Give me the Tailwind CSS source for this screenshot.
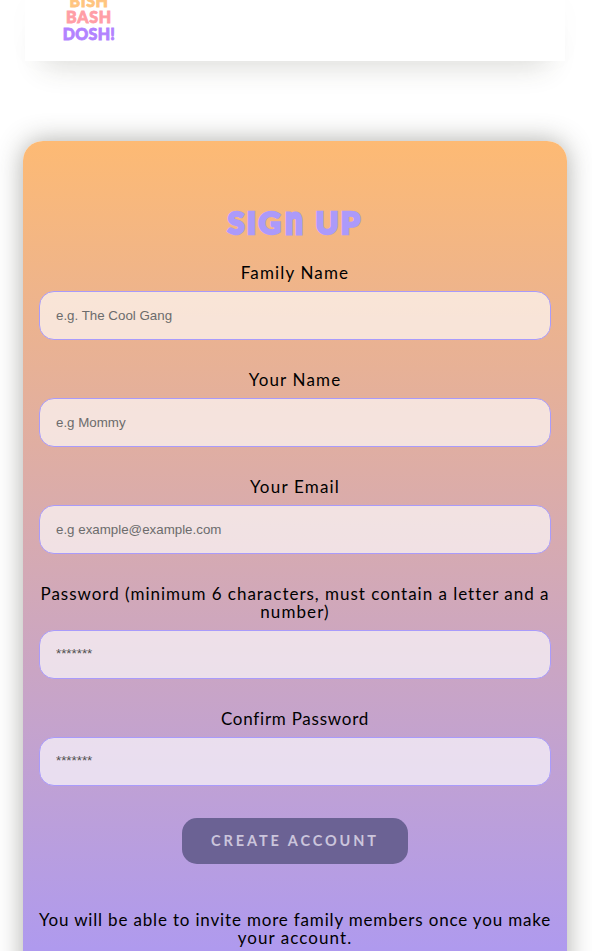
<!DOCTYPE html>
<html lang="en">
<head>
<meta charset="utf-8">
<title>Sign Up</title>
<script src="https://cdn.jsdelivr.net/npm/@tailwindcss/browser@4"></script>
</head>
<body class="h-[951px] overflow-hidden bg-white text-black font-['Lato','Open_Sans',sans-serif]">
<header class="mx-auto flex h-[61px] w-[540px] -translate-x-px items-end bg-white pb-[19px] pl-[38px] shadow-[0_22px_30px_-18px_rgba(60,60,40,0.2),0_0_28px_rgba(0,0,0,0.02)]">
  <div class="flex w-[52px] flex-col items-center text-[16px] leading-[16.5px] font-black [-webkit-text-stroke:0.8px_currentColor]">
    <span class="tracking-[0.6px] text-[#ffc580]">BISH</span>
    <span class="tracking-[0.8px] text-[#ff9ea6]">BASH</span>
    <span class="tracking-[0.3px] text-[#b283ff]">DOSH!</span>
  </div>
</header>
<main class="mx-auto mt-20 flex h-[860px] w-[544px] -translate-x-px flex-col items-center bg-[linear-gradient(180deg,#fdba74_0,#aa98f6_860px)] rounded-[20px] px-4 pt-[61px] shadow-[0_0_26px_rgba(60,60,50,0.42)]">
  <h1 class="h-[40px] text-[31px] leading-[40px] font-black tracking-[2.2px] [word-spacing:1px] whitespace-nowrap text-[#ac9afa] [-webkit-text-stroke:2.5px_currentColor]">SIG<span class="ml-[2px] inline-block origin-bottom translate-y-px scale-y-[1.28] leading-none">n</span> UP</h1>
  <form class="flex w-full flex-col items-center text-center text-[17px] leading-[18px]">
    <label class="mt-[22px] mb-[9px] whitespace-nowrap"><span class="tracking-[1.15px]">Family Name</span></label>
    <input class="h-[49px] w-full rounded-[15px] border border-[#a99bfb] bg-white/65 px-4 font-['Liberation_Sans',Arial,sans-serif] text-[13.33px] placeholder:text-[#6c6c6c]" placeholder="e.g. The Cool Gang">
    <label class="mt-[31px] mb-[9px] whitespace-nowrap"><span class="tracking-[1.15px]">Your Name</span></label>
    <input class="h-[49px] w-full rounded-[15px] border border-[#a99bfb] bg-white/65 px-4 font-['Liberation_Sans',Arial,sans-serif] text-[13.33px] placeholder:text-[#6c6c6c]" placeholder="e.g Mommy">
    <label class="mt-[31px] mb-[9px] whitespace-nowrap"><span class="tracking-[1.2px]">Your Email</span></label>
    <input class="h-[49px] w-full rounded-[15px] border border-[#a99bfb] bg-white/65 px-4 font-['Liberation_Sans',Arial,sans-serif] text-[13.33px] placeholder:text-[#6c6c6c]" placeholder="e.g example@example.com">
    <label class="mt-[31px] mb-[9px] whitespace-nowrap"><span class="tracking-[0.98px]">Password (minimum 6 characters, must contain a letter and a</span><br><span class="tracking-[1.1px]">number)</span></label>
    <input class="h-[49px] w-full rounded-[15px] border border-[#a99bfb] bg-white/65 px-4 pb-[2px] font-['Liberation_Sans',Arial,sans-serif] text-[13.33px] placeholder:text-[#505050]" placeholder="*******">
    <label class="mt-[31px] mb-[9px] whitespace-nowrap"><span class="tracking-[0.75px]">Confirm Password</span></label>
    <input class="h-[49px] w-full rounded-[15px] border border-[#a99bfb] bg-white/65 px-4 pb-[2px] font-['Liberation_Sans',Arial,sans-serif] text-[13.33px] placeholder:text-[#505050]" placeholder="*******">
    <button type="button" class="mt-8 h-[46px] w-[226px] rounded-[15px] bg-[#6b6294] pb-px text-[14.5px] font-bold tracking-[2.9px] whitespace-nowrap text-[#cbc5dc]">CREATE ACCOUNT</button>
    <p class="mt-[47px] whitespace-nowrap"><span class="tracking-[0.83px]">You will be able to invite more family members once you make</span><br><span class="tracking-[1.05px]">your account.</span></p>
  </form>
</main>
</body>
</html>
